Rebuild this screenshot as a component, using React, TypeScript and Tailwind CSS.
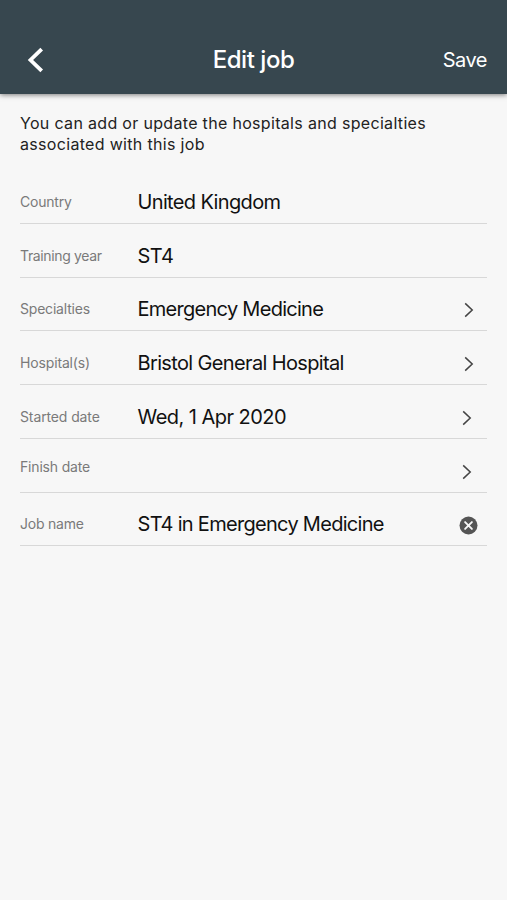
import { ReactNode } from "react";

type Row = {
  label: string;
  value: string;
  labelClass: string;
  valueClass: string;
  icon?: ReactNode;
};

const Chevron = ({ className }: { className: string }) => (
  <svg
    className={className}
    width="10"
    height="16"
    viewBox="0 0 10 16"
    fill="none"
    stroke="#444"
    strokeWidth="1.5"
  >
    <path d="M1.2 1.4L8.2 8l-7 6.6" />
  </svg>
);

const ClearIcon = () => (
  <svg className="mr-[9px] mt-1" width="19" height="19" viewBox="0 0 19 19">
    <circle cx="9.5" cy="9.5" r="9" fill="#555" />
    <path
      d="M6.1 6.1l6.8 6.8M12.9 6.1l-6.8 6.8"
      stroke="#f7f7f7"
      strokeWidth="1.9"
      strokeLinecap="round"
    />
  </svg>
);

const rows: Row[] = [
  {
    label: "Country",
    value: "United Kingdom",
    labelClass: "tracking-[-0.2px]",
    valueClass: "tracking-[-0.64px]",
  },
  {
    label: "Training year",
    value: "ST4",
    labelClass: "tracking-[-0.36px]",
    valueClass: "tracking-[-0.5px]",
  },
  {
    label: "Specialties",
    value: "Emergency Medicine",
    labelClass: "tracking-[-0.2px]",
    valueClass: "tracking-[-0.72px]",
    icon: <Chevron className="mr-[13px] mt-[3px]" />,
  },
  {
    label: "Hospital(s)",
    value: "Bristol General Hospital",
    labelClass: "tracking-[-0.15px]",
    valueClass: "tracking-[-0.64px]",
    icon: <Chevron className="mr-[13px] mt-[3px]" />,
  },
  {
    label: "Started date",
    value: "Wed, 1 Apr 2020",
    labelClass: "tracking-[-0.12px]",
    valueClass: "tracking-[-0.54px]",
    icon: <Chevron className="mr-[15px] mt-[3px]" />,
  },
  {
    label: "Finish date",
    value: "",
    labelClass: "tracking-[-0.18px] pb-2",
    valueClass: "",
    icon: <Chevron className="mr-[15px] mt-[3px]" />,
  },
  {
    label: "Job name",
    value: "ST4 in Emergency Medicine",
    labelClass: "tracking-[-0.22px]",
    valueClass: "tracking-[-0.7px]",
    icon: <ClearIcon />,
  },
];

const App = () => {
  return (
    <div className="h-[900px] w-[507px] overflow-hidden bg-[#f7f7f7] font-['Inter',sans-serif] text-[#111]">
      <header className="flex h-[94px] items-end bg-[#37474f] px-5 pb-4 text-white shadow-[0_1px_5px_rgba(0,0,0,0.5)]">
        <div className="flex h-9 w-20 items-center pl-[7px]">
          <svg width="17" height="26" viewBox="0 0 17 26" fill="none" stroke="#fff" strokeWidth="3.8">
            <path d="M14.7 2.2L3.5 13l11.2 10.8" />
          </svg>
        </div>
        <h1 className="flex-1 text-center text-[24px] leading-9 font-medium tracking-[-0.45px]">
          Edit job
        </h1>
        <button className="w-20 text-right text-[20px] leading-9 tracking-[-0.5px]">Save</button>
      </header>

      <main className="px-5">
        <p className="pt-[19px] text-[16px] leading-[21px] tracking-[0.32px] whitespace-nowrap text-[#222]">
          You can add or update the hospitals and specialties
          <br />
          associated with this job
        </p>

        <div className="mt-[15px]">
          {rows.map((row) => (
            <div
              key={row.label}
              className="flex h-[53.75px] items-center border-b border-[#d8d8d8] pt-2.5"
            >
              <span className={`w-[117.5px] text-[14px] text-[#7a7a7a] ${row.labelClass}`}>
                {row.label}
              </span>
              <span className={`flex-1 pt-px text-[20px] whitespace-nowrap ${row.valueClass}`}>
                {row.value}
              </span>
              {row.icon}
            </div>
          ))}
        </div>
      </main>
    </div>
  );
};

export default App;
